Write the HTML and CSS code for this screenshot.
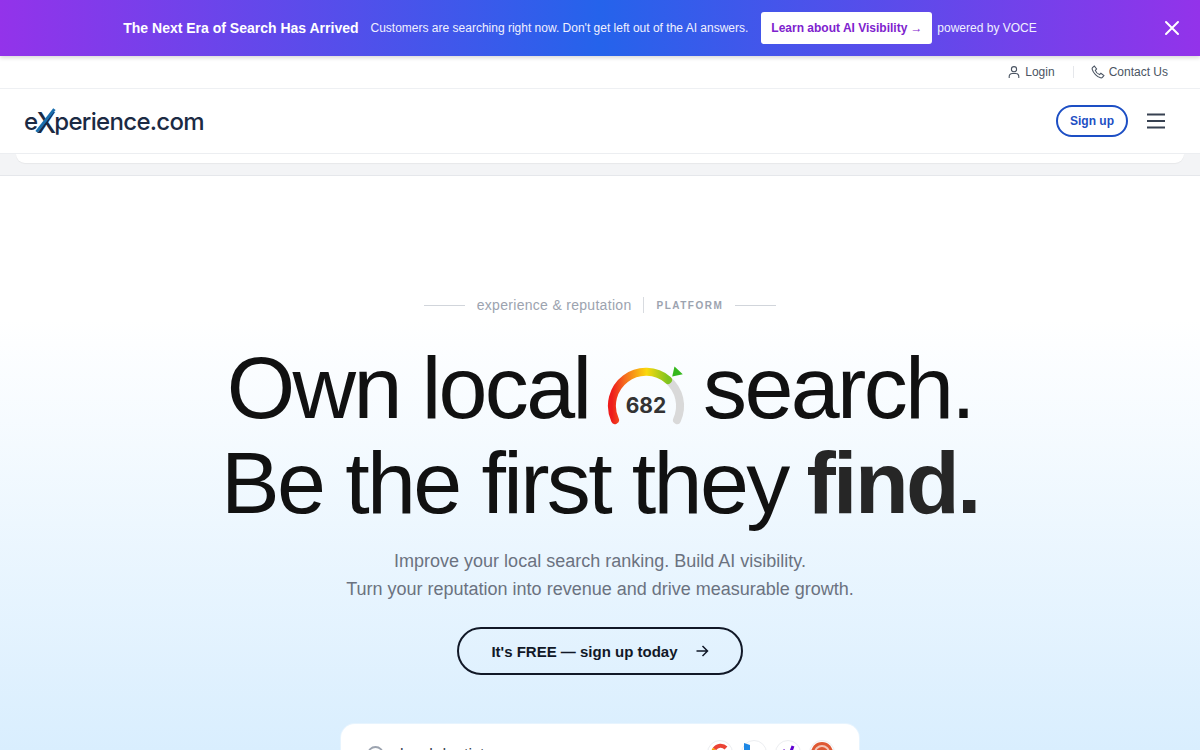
FILE: index.html
```html
<!DOCTYPE html>
<html>
    <head>
        <meta charset="utf-8" />
        <meta name="viewport" content="width=device-width, initial-scale=1.0">
        <title>Experience.com</title>
        <link rel="stylesheet" href="styles.css">
    </head>
    <body>

        <div class="promo">
            <b class="promotitle">The Next Era of Search Has Arrived</b>
            <span class="promotext">Customers are searching right now. Don't get left out of the AI answers.</span>
            <a class="promobtn">Learn about AI Visibility <small>→</small></a>
            <span class="promovoce">powered by VOCE</span>
            <svg class="promoclose" width="16" height="16" viewBox="0 0 16 16"><path d="M2 2 14 14M14 2 2 14" stroke="#fff" stroke-width="2" stroke-linecap="round"/></svg>
        </div>

        <div class="topbar">
            <a class="toplink">
                <svg width="14" height="14" viewBox="0 0 14 14" fill="none" stroke="#4b5563" stroke-width="1.1"><circle cx="7" cy="4.2" r="2.6"/><path d="M2.2 13v-1.4a3.2 3.2 0 0 1 3.2-3.1h3.2a3.2 3.2 0 0 1 3.2 3.1V13"/></svg>
                Login
            </a>
            <span class="topsep"></span>
            <a class="toplink">
                <svg width="14" height="14" viewBox="0 0 14 14" fill="none" stroke="#4b5563" stroke-width="1.1"><path d="M1.5 2.6 3.3 1l2.3 3-1.3 1.4c.6 1.700 2.300 3.400 4.200 4.200l1.400-1.300 3 2.200-1.500 1.900c-.5.500-1.200.600-1.900.400C6 11.800 2.300 8.100 1.200 4.400c-.2-.7-.1-1.300.3-1.800z"/></svg>
                Contact Us
            </a>
        </div>

        <div class="nav">
            <a class="logo">e<span class="logox">X</span>perience.com</a>
            <div class="navright">
                <a class="signup">Sign up</a>
                <svg width="20" height="16" viewBox="0 0 20 16"><path d="M1 1.500H19M1 8H19M1 14.500H19" stroke="#374151" stroke-width="2"/></svg>
            </div>
        </div>

        <div class="subnav"><div class="subnavbox"></div></div>

        <div class="hero">
            <div class="eyebrow">
                <span class="eyeline"></span>
                <span class="eyetext">experience &amp; reputation</span>
                <span class="eyesep"></span>
                <span class="eyeplat">PLATFORM</span>
                <span class="eyeline"></span>
            </div>

            <h1 class="headline">
                <span class="hline">Own local
                    <svg class="gauge" width="80" height="62" viewBox="0 0 80 62">
                        <defs>
                            <linearGradient id="arcgrad" gradientUnits="userSpaceOnUse" x1="6" y1="0" x2="62" y2="0">
                                <stop offset="0" stop-color="#ee1c1c"/>
                                <stop offset="0.22" stop-color="#f56a1f"/>
                                <stop offset="0.62" stop-color="#fbd90c"/>
                                <stop offset="1" stop-color="#7ec41f"/>
                            </linearGradient>
                        </defs>
                        <path d="M62 14A34 34 0 0 1 71 54" fill="none" stroke="#d9d9d9" stroke-width="8" stroke-linecap="round"/>
                        <path d="M9 54A34 34 0 0 1 62 14" fill="none" stroke="url(#arcgrad)" stroke-width="8" stroke-linecap="round"/>
                        <path d="M68.500 .5 76.800 8.200 66.200 10.500z" fill="#35b81c"/>
                        <text x="40" y="46.500" class="gaugenum" text-anchor="middle">682</text>
                    </svg>
                    search.</span>
                <span class="hline">Be the first they <b class="find">find.</b></span>
            </h1>

            <p class="subhead">Improve your local search ranking. Build AI visibility.<br>Turn your reputation into revenue and drive measurable growth.</p>

            <a class="cta">It's FREE — sign up today
                <svg width="14" height="14" viewBox="0 0 14 14" fill="none" stroke="#111827" stroke-width="1.500"><path d="M1.500 7H12.500M7.500 2 12.500 7 7.500 12"/></svg>
            </a>

            <div class="searchcard">
                <svg class="searchicon" width="18" height="18" viewBox="0 0 18 18" fill="none" stroke="#9ca3af" stroke-width="1.800"><circle cx="8.500" cy="8.500" r="7.500"/><path d="M14 14 17 17"/></svg>
                <span class="searchtext">local dentist</span>
                <div class="engines">
                    <span class="engine"><svg width="20" height="20" viewBox="0 0 20 20" fill="none" stroke-width="4"><path d="M4.500 6A7.500 7.500 0 0 1 16 5" stroke="#ea4335"/><path d="M4.500 6A7.500 7.500 0 0 0 4 14" stroke="#fb9c05"/></svg></span>
                    <span class="engine"><svg width="20" height="20" viewBox="0 0 20 20"><path d="M0 0 6 2V14H0z" fill="#1e88e5"/></svg></span>
                    <span class="engine"><svg width="20" height="20" viewBox="0 0 20 20" fill="none" stroke="#5f01d1" stroke-width="3"><path d="M15 3 12 11M5 7 8 11"/></svg></span>
                    <span class="engine"><svg width="22" height="22" viewBox="0 0 22 22"><circle cx="11" cy="11" r="11" fill="#de5833"/><circle cx="11" cy="11" r="7" fill="none" stroke="#f3c4b6" stroke-width="2"/></svg></span>
                </div>
            </div>
        </div>

    </body>
</html>
```

FILE: styles.css
```css
*
{
    box-sizing: border-box;
}

html, body
{
    height: 750px;
    overflow: hidden;
}

body
{
    margin: 0;
    font: 12px "Liberation Sans", Arial, sans-serif;
    color: #111827;
    background: #fff;
}

/* promo banner */
.promo
{
    position: relative;
    z-index: 2;
    height: 56px;
    display: flex;
    align-items: center;
    justify-content: center;
    padding-right: 40px;
    color: #fff;
    background: linear-gradient(90deg, #9333ea 0%, #2563eb 50%, #9333ea 100%);
    box-shadow: 0 2px 4px rgba(0,0,0,.15);
}
.promotitle
{
    font-size: 14px;
    margin-right: 12px;
}
.promotext
{
    color: #f0f0ff;
}
.promobtn
{
    margin: 0 5px 0 13px;
    width: 171px;
    height: 32px;
    padding: 0 10px;
    display: flex;
    align-items: center;
    gap: 3px;
    background: #fff;
    border-radius: 3px;
    color: #7e22ce;
    font-weight: 700;
    white-space: nowrap;
}
.promobtn small
{
    font-size: 12px;
    font-weight: 400;
}
.promovoce
{
    color: #f0f0ff;
}
.promoclose
{
    position: absolute;
    right: 20px;
    top: 20px;
}

/* top links */
.topbar
{
    height: 33px;
    display: flex;
    align-items: center;
    justify-content: flex-end;
    padding: 0 32px 0 0;
    border-bottom: 1px solid #eef0f3;
    color: #4b5563;
}
.toplink
{
    display: flex;
    align-items: center;
    gap: 4px;
}
.topsep
{
    width: 1px;
    height: 12px;
    margin: 0 17px 0 18px;
    background: #e5e7eb;
}

/* main nav */
.nav
{
    height: 65px;
    display: flex;
    align-items: center;
    justify-content: space-between;
    padding: 0 34px 0 24px;
    border-bottom: 1px solid #eceef1;
}
.logo
{
    font: 500 24px "Inter", sans-serif;
    letter-spacing: -0.7px;
    color: #1b2a44;
}
.logox
{
    position: relative;
    margin: 0 -1px;
    font-size: 28px;
    line-height: 20px;
    vertical-align: -3px;
}
.logox::after
{
    content: "";
    position: absolute;
    left: 8px;
    top: 0;
    width: 3px;
    height: 29px;
    background: #1b6fae;
    transform: rotate(38deg);
}
.navright
{
    display: flex;
    align-items: center;
    gap: 18px;
}
.signup
{
    width: 72px;
    height: 32px;
    display: flex;
    align-items: center;
    justify-content: center;
    border: 2px solid #1d4fc4;
    border-radius: 16px;
    color: #1d4fc4;
    font-weight: 700;
}

.subnav
{
    height: 22px;
    padding: 0 16px;
    background: #f3f4f6;
    border-bottom: 1px solid #e5e7eb;
}
.subnavbox
{
    height: 9px;
    background: #fff;
    border-radius: 0 0 14px 14px;
    box-shadow: 0 1px 1px rgba(0,0,0,.05);
}

/* hero */
.hero
{
    height: 574px;
    display: flex;
    flex-direction: column;
    align-items: center;
    padding-top: 120px;
    background: linear-gradient(180deg, #fff 0%, #fff 25%, #d9eefe 100%);
}
.hero > *
{
    flex: none;
}
.eyebrow
{
    display: flex;
    align-items: center;
    height: 18px;
    color: #9ca3af;
}
.eyeline
{
    width: 41px;
    height: 1px;
    background: #d1d5db;
}
.eyetext
{
    margin-left: 12px;
    font-size: 14px;
    letter-spacing: .3px;
}
.eyesep
{
    width: 1px;
    height: 16px;
    margin: 0 12px;
    background: #d8dbe0;
}
.eyeplat
{
    margin-right: 12px;
    font-size: 10px;
    font-weight: 700;
    letter-spacing: 1.5px;
}
.headline
{
    margin: 26px 0 0;
    font-size: 88px;
    font-weight: 400;
    line-height: 95px;
    letter-spacing: -2.64px;
    color: #111;
    text-align: center;
}
.hline
{
    display: block;
    white-space: nowrap;
}
.find
{
    margin-left: -3px;
    color: #262626;
}
.gauge
{
    margin: 0 -5px;
    vertical-align: -10px;
}
.gaugenum
{
    font: 700 21px "Inter", "Liberation Sans", sans-serif;
    fill: #333;
    letter-spacing: 0;
}
.subhead
{
    margin: 17px 0 0;
    font-size: 18px;
    line-height: 28px;
    color: #6b7280;
    text-align: center;
}
.cta
{
    margin-top: 24px;
    width: 286px;
    height: 48px;
    display: flex;
    align-items: center;
    justify-content: center;
    gap: 17px;
    border: 2px solid #111827;
    border-radius: 24px;
    font-size: 15px;
    font-weight: 700;
}
.searchcard
{
    margin-top: 49px;
    width: 518px;
    height: 70px;
    display: flex;
    align-items: flex-start;
    padding: 16px 24px 0 26px;
    background: #fff;
    border-radius: 14px;
    box-shadow: 0 0 0 1px rgba(255,255,255,.35);
}
.searchicon
{
    margin-top: 6px;
}
.searchtext
{
    margin-left: 15px;
    margin-top: 6px;
    font-size: 16px;
    color: #374151;
}
.engines
{
    margin-left: auto;
    display: flex;
    gap: 8px;
}
.engine
{
    width: 26px;
    height: 26px;
    display: flex;
    align-items: center;
    justify-content: center;
    background: #fff;
    border: 1px solid #eceef1;
    border-radius: 50%;
}
```
